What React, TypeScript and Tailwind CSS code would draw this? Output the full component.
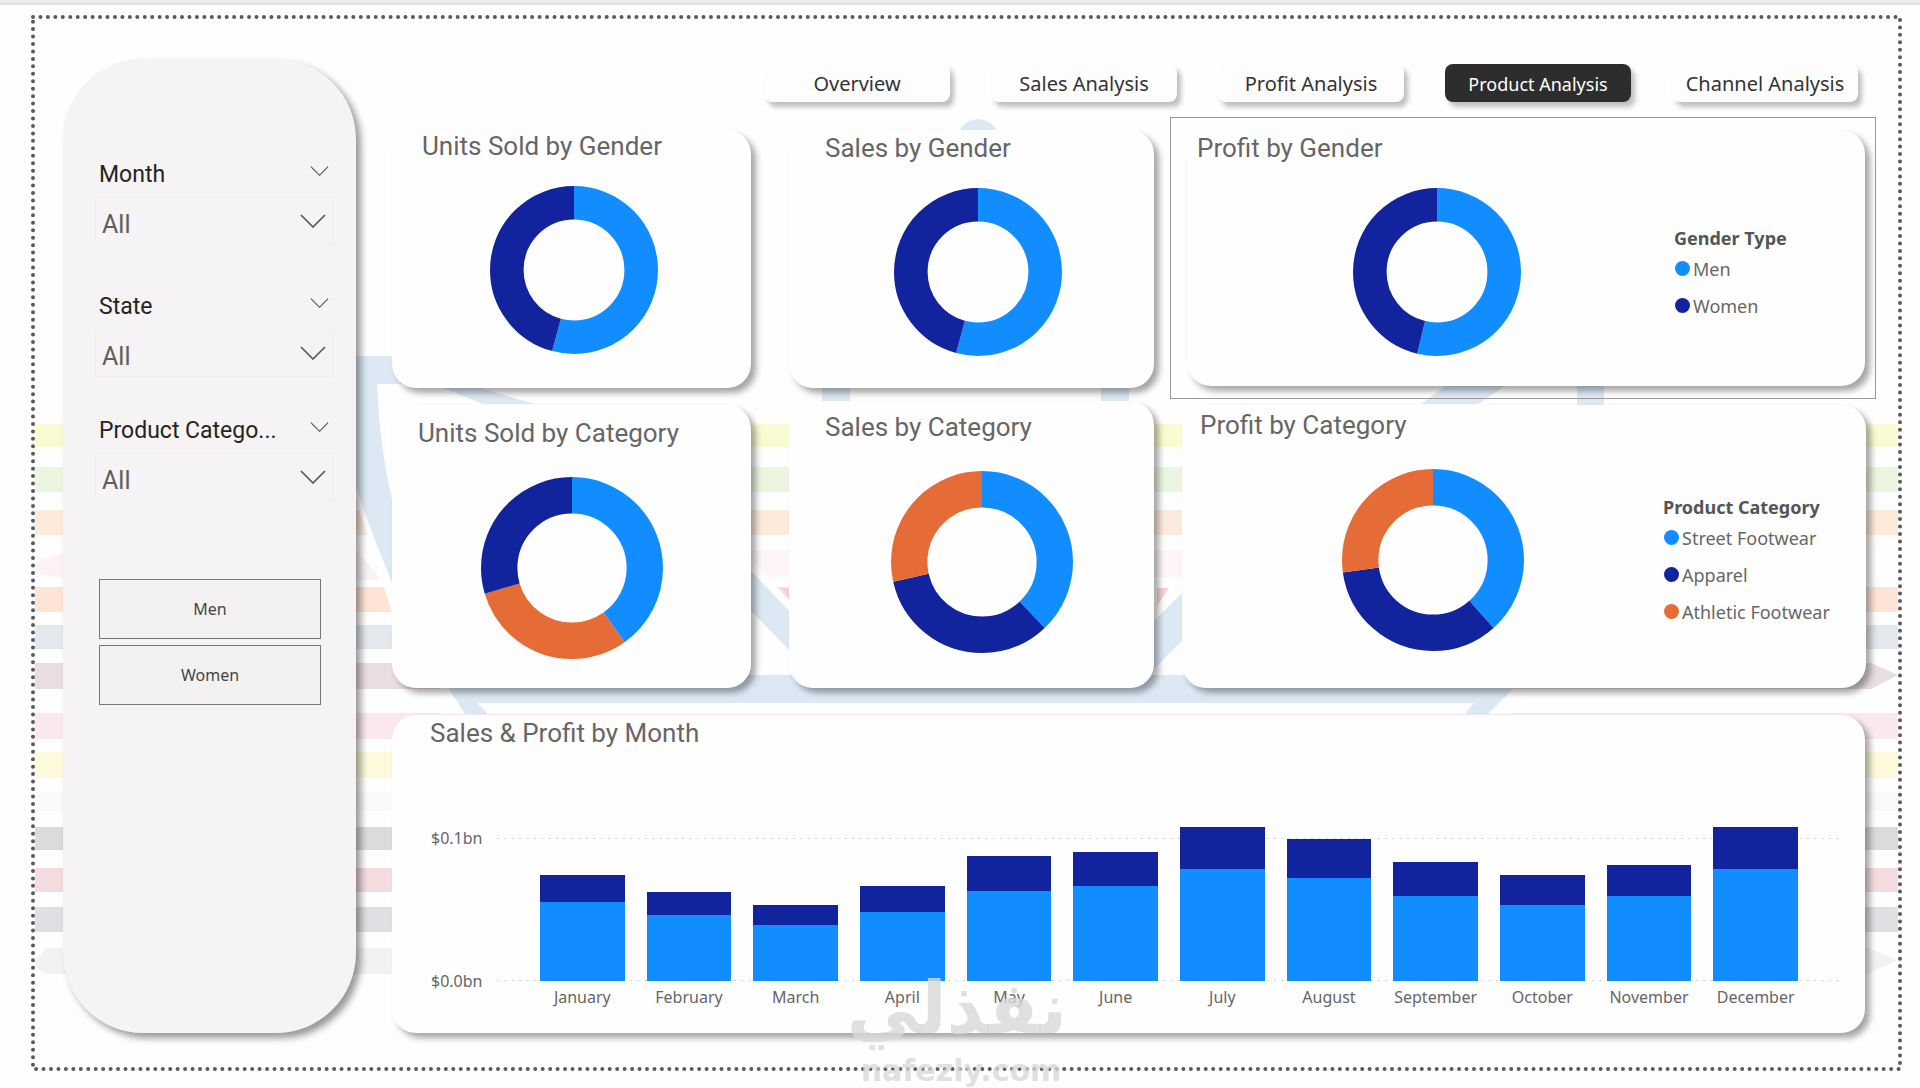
import { useState } from 'react';
import { clsx } from 'clsx';

const BLUE = '#118dff';
const NAVY = '#12239e';
const ORANGE = '#e66c37';

const TABS = ['Overview', 'Sales Analysis', 'Profit Analysis', 'Product Analysis', 'Channel Analysis'];

const GENDERS = [
  { label: 'Men', color: BLUE },
  { label: 'Women', color: NAVY },
];

const CATEGORIES = [
  { label: 'Street Footwear', color: BLUE },
  { label: 'Apparel', color: NAVY },
  { label: 'Athletic Footwear', color: ORANGE },
];

// sales and profit in $ millions
const MONTHS = [
  { name: 'January', sales: 55, profit: 19 },
  { name: 'February', sales: 46, profit: 16 },
  { name: 'March', sales: 39, profit: 14 },
  { name: 'April', sales: 48, profit: 18 },
  { name: 'May', sales: 63, profit: 24 },
  { name: 'June', sales: 66, profit: 24 },
  { name: 'July', sales: 78, profit: 29 },
  { name: 'August', sales: 72, profit: 27 },
  { name: 'September', sales: 59, profit: 24 },
  { name: 'October', sales: 53, profit: 21 },
  { name: 'November', sales: 59, profit: 22 },
  { name: 'December', sales: 78, profit: 29 },
];

const PENCILS = [
  { y: 409, h: 23, color: '#f9fcd2' },
  { y: 452, h: 25, color: '#ebf6e0' },
  { y: 495, h: 25, color: '#fceadb' },
  { y: 572, h: 25, color: '#fde4d7' },
  { y: 610, h: 24, color: '#e3e8ef' },
  { y: 648, h: 26, color: '#e9dde1' },
  { y: 698, h: 26, color: '#fae7ef' },
  { y: 737, h: 26, color: '#fcf9dc' },
  { y: 777, h: 19, color: '#fafafa' },
  { y: 812, h: 23, color: '#dcdbdc' },
  { y: 853, h: 24, color: '#f4dce0' },
  { y: 892, h: 25, color: '#dfe0e3' },
];

type Slice = { value: number; color: string };

function Donut({ slices, size, label }: { slices: Slice[]; size: number; label: string }) {
  let start = 0;
  return (
    <svg width={size} height={size} viewBox="0 0 100 100" role="img" aria-label={label} className="shrink-0">
      {slices.map((s) => {
        const offset = -start;
        start += s.value;
        return (
          <circle
            key={s.color}
            cx="50"
            cy="50"
            r="40"
            fill="none"
            stroke={s.color}
            strokeWidth="20"
            pathLength={100}
            strokeDasharray={`${s.value} ${100 - s.value}`}
            strokeDashoffset={offset}
            transform="rotate(-90 50 50)"
          />
        );
      })}
    </svg>
  );
}

function Chevron({ className }: { className: string }) {
  return (
    <svg viewBox="0 0 26 14" className={className} fill="none" stroke="#555" strokeWidth="1.6" aria-hidden>
      <path d="M1 1l12 12L25 1" />
    </svg>
  );
}

function Filter({ id, label }: { id: string; label: string }) {
  return (
    <div>
      <div className="flex h-11 items-center justify-between pr-[5px] pl-1">
        <label htmlFor={id} className="font-['Roboto',sans-serif] text-[23px] leading-8 text-[#252423]">
          {label}
        </label>
        <button type="button" aria-label={`Clear ${label}`} className="mb-2">
          <Chevron className="h-[10px] w-[19px]" />
        </button>
      </div>
      <div className="relative">
        <select
          id={id}
          className="h-12 w-full appearance-none border border-[#efedee] bg-transparent pt-2 pl-[6px] font-['Roboto',sans-serif] text-[25px] text-[#605e5c]"
        >
          <option>All</option>
        </select>
        <Chevron className="pointer-events-none absolute top-[17px] right-2 h-[14px] w-[26px]" />
      </div>
    </div>
  );
}

function Sidebar() {
  return (
    <aside className="w-[293px] shrink-0 rounded-[80px] bg-[#f5f3f4] pt-[94px] pr-[22px] pl-8 shadow-[5px_5px_7px_rgba(0,0,0,0.4)]">
      <Filter id="month" label="Month" />
      <div className="mt-10 mb-8">
        <Filter id="state" label="State" />
      </div>
      <Filter id="category" label="Product Catego..." />
      <div className="mt-[78px] mr-[13px] ml-1 flex flex-col gap-1.5">
        {GENDERS.map((g) => (
          <button
            key={g.label}
            type="button"
            className="h-[60px] border border-[#777] bg-[#f3f1f2] font-['Noto_Sans',sans-serif] text-base text-[#444]"
          >
            {g.label}
          </button>
        ))}
      </div>
    </aside>
  );
}

function Card({
  title,
  className,
  titleClass,
  children,
}: {
  title: string;
  className?: string;
  titleClass?: string;
  children: React.ReactNode;
}) {
  return (
    <section className={clsx('rounded-3xl bg-[#fefefe] shadow-[5px_5px_6px_rgba(0,0,0,0.35)]', className)}>
      <h2 className={clsx("font-['Roboto',sans-serif] text-[26px] leading-8 text-[#666]", titleClass)}>{title}</h2>
      {children}
    </section>
  );
}

function Legend({ title, items, className }: { title: string; items: { label: string; color: string }[]; className: string }) {
  return (
    <div className={clsx("shrink-0 font-['Noto_Sans',sans-serif] text-lg leading-6 text-[#666]", className)}>
      <h3 className="font-bold text-[#555]">{title}</h3>
      <ul>
        {items.map((i) => (
          <li key={i.label} className="flex h-[37px] items-center gap-[3px] pl-px">
            <svg width="15" height="15" aria-hidden>
              <circle cx="7.5" cy="7.5" r="7.5" fill={i.color} />
            </svg>
            {i.label}
          </li>
        ))}
      </ul>
    </div>
  );
}

function MonthChart() {
  return (
    <div className="mt-[89px] flex pr-[26px] pl-[39px] font-['Noto_Sans',sans-serif] text-base leading-6 text-[#666]">
      <div className="-my-3 flex h-[167px] w-[66px] shrink-0 flex-col justify-between">
        <span>$0.1bn</span>
        <span>$0.0bn</span>
      </div>
      <div className="flex-1">
        <div className="relative h-[143px]">
          <svg className="absolute inset-0 h-full w-full" aria-hidden>
            <g stroke="#cfcfcf" strokeWidth="1" strokeDasharray="2 5.4">
              <line x1="0" x2="100%" y1="0.5" y2="0.5" />
              <line x1="0" x2="100%" y1="142.5" y2="142.5" />
            </g>
          </svg>
          <div className="relative flex h-full items-end pr-[30px] pl-8">
            {MONTHS.map((m) => (
              <div key={m.name} className="mx-[11px] flex-1">
                <div className="bg-[#12239e]" style={{ height: m.profit * 1.435 }} />
                <div className="bg-[#118dff]" style={{ height: m.sales * 1.435 }} />
              </div>
            ))}
          </div>
        </div>
        <div className="mt-1 grid grid-cols-12 pr-[30px] pl-8 text-center">
          {MONTHS.map((m) => (
            <span key={m.name}>{m.name}</span>
          ))}
        </div>
      </div>
    </div>
  );
}

// faded wallpaper: rows of pencils behind a pair of compasses
function Wallpaper() {
  return (
    <svg className="absolute inset-0 h-full w-full" viewBox="0 0 1871 1056" preserveAspectRatio="none" aria-hidden>
      {PENCILS.map((p) => (
        <rect key={p.y} x="4" y={p.y} width="1863" height={p.h} fill={p.color} />
      ))}
      <path d="M4 547l40-12v30l-40-7z" fill="#fdf1f3" />
      <path d="M714 535h440v27h-440z" fill="#fdf5f6" />
      <path d="M16 933h1820l31 12-31 14H16Q4 955 4 946z" fill="#f2f2f2" />
      <g fill="#fefefe">
        <path d="M314 325h60v280l-13-8-36-112-11-40z" />
        <path d="M714 538l60 64v-34h380v92H714z" />
        <path d="M409 672h1070v27H409z" />
        <path d="M1839 648h32v26h-32z" />
      </g>
      <path d="M1830 648h10l27 12-27 14h-10z" fill="#e9dde1" />
      <path d="M325 535l22 26v4h-22z" fill="#fbf2f4" />
      <path d="M750 572l8 2v11zM1126 573h12l-12 18z" fill="#f6d2d3" />
      <g fill="#dce9f5">
        <path d="M314 341h60v28h-28q2 60 15 116v83q-24-60-36-96l-11-30z" />
        <path d="M425 366l79 23h-52l-60-24z" />
        <path d="M409 660h1087l-39 39h-23l9-11H446l11 11h-23z" />
        <path d="M714 549l6 7 38 40v39l-38-39-6-6zM1154 575l-34 34v48l34-34z" />
        <path d="M791 370h28v16h-28zM1070 370h28v16h-28zM1546 370h27v20h-27zM1390 389l30-22h60l-33 22z" />
        <circle cx="947" cy="124" r="20" />
      </g>
    </svg>
  );
}

export default function App() {
  const [tab, setTab] = useState('Product Analysis');

  return (
    <div className="min-h-screen bg-[#fefefe] pb-4">
      <div className="h-[5px] bg-gradient-to-b from-[#f2f2f2] to-[#dedede]" />
      <div className="relative mt-[10px] mr-[18px] ml-[31px] flex pt-11 pr-[26px] pb-[38px] pl-8">
        <Wallpaper />
        <svg className="absolute inset-0 h-full w-full overflow-visible p-0.5" aria-hidden>
          <rect
            width="100%"
            height="100%"
            fill="none"
            stroke="#5a5a5a"
            strokeWidth="4"
            strokeLinecap="round"
            strokeDasharray="0 7.45"
          />
        </svg>
        <div className="relative flex w-full gap-9">
          <Sidebar />
          <main className="min-w-0 flex-1 pt-[5px]">
            <nav className="mr-[18px] flex justify-end gap-[41px]">
              {TABS.map((name) => (
                <button
                  key={name}
                  type="button"
                  onClick={() => setTab(name)}
                  className={clsx(
                    "h-[38px] w-[186px] rounded-lg pt-0.5 font-['Noto_Sans',sans-serif] whitespace-nowrap shadow-[4px_5px_5px_rgba(0,0,0,0.25)]",
                    tab === name ? 'bg-[#2d2d2d] text-lg text-white' : 'bg-[#fdfdfd] text-xl text-[#333]',
                  )}
                >
                  {name}
                </button>
              ))}
            </nav>

            <div className="mt-[15px] grid grid-cols-[381fr_365fr_706fr] gap-x-4 gap-y-0.5">
              <Card title="Units Sold by Gender" className="mt-[13px] mr-[22px] mb-[11px]" titleClass="pl-[30px]">
                <div className="flex justify-center pt-6 pl-1">
                  <Donut
                    label="Units sold by gender"
                    size={168}
                    slices={[{ value: 54.2, color: BLUE }, { value: 45.8, color: NAVY }]}
                  />
                </div>
              </Card>
              <Card title="Sales by Gender" className="mt-[13px] mb-[11px]" titleClass="pt-0.5 pl-9">
                <div className="flex justify-center pt-6 pl-3">
                  <Donut
                    label="Sales by gender"
                    size={168}
                    slices={[{ value: 54.2, color: BLUE }, { value: 45.8, color: NAVY }]}
                  />
                </div>
              </Card>
              <div className="h-[282px] border border-[#999] pt-3 pr-[10px] pb-3 pl-4">
                <Card title="Profit by Gender" className="h-full" titleClass="pt-0.5 pl-[10px]">
                  <div className="flex">
                    <div className="flex flex-1 justify-center pt-6 pl-3">
                      <Donut
                        label="Profit by gender"
                        size={168}
                        slices={[{ value: 53.8, color: BLUE }, { value: 46.2, color: NAVY }]}
                      />
                    </div>
                    <Legend title="Gender Type" items={GENDERS} className="w-[191px] pt-[62px]" />
                  </div>
                </Card>
              </div>

              <Card title="Units Sold by Category" className="mt-1 mr-[22px]" titleClass="pt-3 pl-[26px]">
                <div className="flex justify-center pt-7">
                  <Donut
                    label="Units sold by category"
                    size={182}
                    slices={[
                      { value: 40.2, color: BLUE },
                      { value: 30.2, color: ORANGE },
                      { value: 29.6, color: NAVY },
                    ]}
                  />
                </div>
              </Card>
              <Card title="Sales by Category" titleClass="pt-[10px] pl-9">
                <div className="flex justify-center pt-7 pl-5">
                  <Donut
                    label="Sales by category"
                    size={182}
                    slices={[
                      { value: 37.9, color: BLUE },
                      { value: 33.6, color: NAVY },
                      { value: 28.5, color: ORANGE },
                    ]}
                  />
                </div>
              </Card>
              <Card title="Profit by Category" className="mt-1 mr-[10px] ml-3 h-[283px]" titleClass="pt-1 pl-[18px]">
                <div className="flex">
                  <div className="flex flex-1 justify-center pt-7 pl-5">
                    <Donut
                      label="Profit by category"
                      size={182}
                      slices={[
                        { value: 38.4, color: BLUE },
                        { value: 34.4, color: NAVY },
                        { value: 27.2, color: ORANGE },
                      ]}
                    />
                  </div>
                  <Legend title="Product Category" items={CATEGORIES} className="w-[203px] pt-[54px]" />
                </div>
              </Card>
            </div>

            <Card title="Sales & Profit by Month" className="mt-[27px] mr-[11px] h-[318px]" titleClass="pt-0.5 pl-[38px]">
              <MonthChart />
            </Card>
          </main>
        </div>

        {/* watermark */}
        <div className="pointer-events-none absolute bottom-[-20px] left-[824px] w-[212px] text-center font-bold text-[#d8d8d8]/80">
          <p lang="ar" dir="rtl" className="font-['DejaVu_Sans',sans-serif] text-[72px] leading-[86px]">
            نفذلي
          </p>
          <p className="font-['DejaVu_Sans',sans-serif] text-[30px] leading-10">nafezly.com</p>
        </div>
      </div>
    </div>
  );
}
